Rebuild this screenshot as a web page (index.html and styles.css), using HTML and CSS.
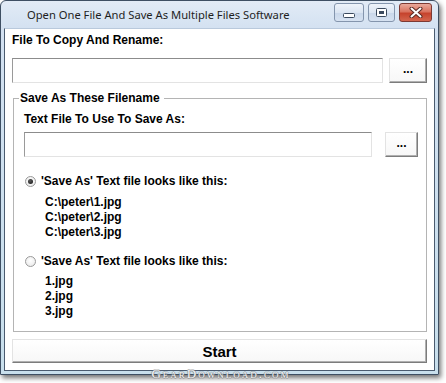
FILE: index.html
```html
<!DOCTYPE html>
<html>
<head>
<meta charset="utf-8">
<link rel="stylesheet" href="styles.css">
</head>
<body>
<div class="window">
  <div class="titlebar">
    <div class="title">Open One File And Save As Multiple Files Software</div>
    <div class="caption-buttons">
      <div class="cbtn min"><svg width="12" height="5" viewBox="0 0 12 5"><rect x="0.5" y="0.5" width="11" height="4" rx="1" fill="#fff" stroke="#3b4a5e"/></svg></div>
      <div class="cbtn max"><svg width="11" height="9" viewBox="0 0 11 9"><rect x="0.5" y="0.5" width="10" height="8" rx="1" fill="#fff" stroke="#3b4a5e"/><rect x="3" y="3" width="5" height="3" fill="#3b4a5e"/></svg></div>
      <div class="cbtn close"><svg width="14" height="11" viewBox="0 0 14 11"><path d="M2.5 1.5 L11.5 9.5 M11.5 1.5 L2.5 9.5" stroke="#5a2a24" stroke-width="4" stroke-linecap="round"/><path d="M2.5 1.5 L11.5 9.5 M11.5 1.5 L2.5 9.5" stroke="#fff" stroke-width="2" stroke-linecap="round"/></svg></div>
    </div>
  </div>
  <div class="client">
    <div class="label">File To Copy And Rename:</div>
    <div class="row row-top">
      <div class="textbox"></div>
      <div class="btn browse">...</div>
    </div>
    <fieldset class="group">
      <legend>Save As These Filename</legend>
      <div class="label">Text File To Use To Save As:</div>
      <div class="row row-inner">
        <div class="textbox"></div>
        <div class="btn browse small">...</div>
      </div>
      <div class="radio-row first"><span class="radio checked"></span><span class="label">'Save As' Text file looks like this:</span></div>
      <div class="list first-list">
        <div>C:\peter\1.jpg</div>
        <div>C:\peter\2.jpg</div>
        <div>C:\peter\3.jpg</div>
      </div>
      <div class="radio-row second"><span class="radio"></span><span class="label">'Save As' Text file looks like this:</span></div>
      <div class="list second-list">
        <div>1.jpg</div>
        <div>2.jpg</div>
        <div>3.jpg</div>
      </div>
    </fieldset>
    <div class="btn start">Start</div>
  </div>
</div>
<div class="watermark">GearDownload.com</div>
</body>
</html>
```

FILE: styles.css
```css
* { box-sizing: border-box; }
body {
  margin: 0;
  width: 446px;
  height: 383px;
  background: #fff;
  position: relative;
  overflow: hidden;
  font-family: "Liberation Sans", Arial, sans-serif;
  color: #000;
}
.window {
  width: 439px;
  height: 375px;
  border: 1px solid #3e4f63;
  border-radius: 6px 6px 0 0;
  background: linear-gradient(#e2ebf6, #d3e1f1 28px, #c8dfec);
  padding: 0 3px 3px 3px;
  display: flex;
  flex-direction: column;
  box-shadow: 2px 3px 5px rgba(0, 0, 0, 0.55);
}
.titlebar {
  height: 27px;
  flex: none;
  display: flex;
  align-items: flex-start;
  justify-content: space-between;
}
.title {
  font-family: "Noto Sans", sans-serif;
  font-size: 11.2px;
  line-height: 16px;
  color: #1e1e1e;
  margin: 6px 0 0 23px;
  white-space: nowrap;
}
.caption-buttons {
  display: flex;
  gap: 4px;
  margin: 2px 3px 0 0;
}
.cbtn {
  height: 19px;
  border: 1px solid #8495ad;
  border-radius: 3px;
  background: linear-gradient(#eef3fa, #dbe5f2 50%, #c9d7ea 51%, #d6e2f1);
  display: flex;
  align-items: center;
  justify-content: center;
}
.cbtn.min { width: 30px; align-items: flex-end; padding-bottom: 3px; }
.cbtn.max { width: 27px; }
.cbtn.close {
  width: 33px;
  border-color: #7d3a33;
  background: linear-gradient(#e9a99b, #d9735f 45%, #c6432d 55%, #d3664e);
}
.client {
  flex: 1;
  background: #fff;
  border: 1px solid #4a5b6f;
  border-top-color: #b9c9dc;
  padding: 4px 7px 7px 7px;
  display: flex;
  flex-direction: column;
}
.label {
  font-size: 12px;
  font-weight: bold;
  line-height: 14px;
  white-space: nowrap;
}
.row {
  display: flex;
  height: 25px;
}
.row-top { margin-top: 11px; gap: 6px; }
.row-inner { margin-top: 6px; gap: 13px; }
.textbox {
  flex: 1;
  background: #fff;
  border: 1px solid #e3e3e3;
  border-top-color: #8c8c8c;
  border-left-color: #9a9a9a;
}
.btn {
  background: linear-gradient(#ffffff, #f7f7f7);
  border: 1px solid #e3e3e3;
  border-right-color: #7c7c7c;
  border-bottom-color: #7c7c7c;
  box-shadow: inset -1px -1px 0 #b0b0b0;
  font-weight: bold;
  display: flex;
  align-items: center;
  justify-content: center;
}
.browse {
  width: 38px;
  font-size: 12px;
  padding-bottom: 3px;
}
.browse.small { width: 33px; }
.group {
  margin: 8px 0 0 1px;
  border: 1px solid #b4b4b4;
  padding: 7px 8px 12px 10px;
  min-inline-size: 0;
}
.group legend {
  font-size: 12px;
  font-weight: bold;
  line-height: 14px;
  padding: 0 4px 0 1px;
  margin-left: -5px;
}
.radio-row {
  display: flex;
  align-items: center;
  height: 14px;
  gap: 5px;
  padding-left: 1px;
}
.radio-row.first { margin-top: 17px; }
.radio-row.second { margin-top: 14px; }
.radio {
  width: 11px;
  height: 11px;
  border-radius: 50%;
  border: 1px solid #9a9a9a;
  background: radial-gradient(circle at 50% 40%, #ffffff, #e6e6e6);
  display: flex;
  align-items: center;
  justify-content: center;
  flex: none;
}
.radio.checked::after {
  content: "";
  width: 5px;
  height: 5px;
  border-radius: 50%;
  background: radial-gradient(circle at 40% 35%, #5a5a5a, #111);
}
.list {
  font-size: 12px;
  font-weight: bold;
  line-height: 15px;
  margin-left: 21px;
}
.first-list { margin-top: 7px; }
.second-list { margin-top: 6px; }
.start {
  margin-top: 7px;
  height: 24px;
  font-size: 15px;
  border-right-width: 1px;
}
.watermark {
  position: absolute;
  left: 0;
  right: 0;
  top: 367px;
  text-align: center;
  font-family: "Liberation Serif", serif;
  font-variant: small-caps;
  font-size: 13px;
  line-height: 14px;
  letter-spacing: 2px;
  color: #f4f4f4;
  text-shadow: 1px 0 0 rgba(120,120,120,0.5), -1px 0 0 rgba(120,120,120,0.5), 0 1px 0 rgba(120,120,120,0.5), 0 -1px 0 rgba(120,120,120,0.5);
  padding-right: 4px;
}
```
